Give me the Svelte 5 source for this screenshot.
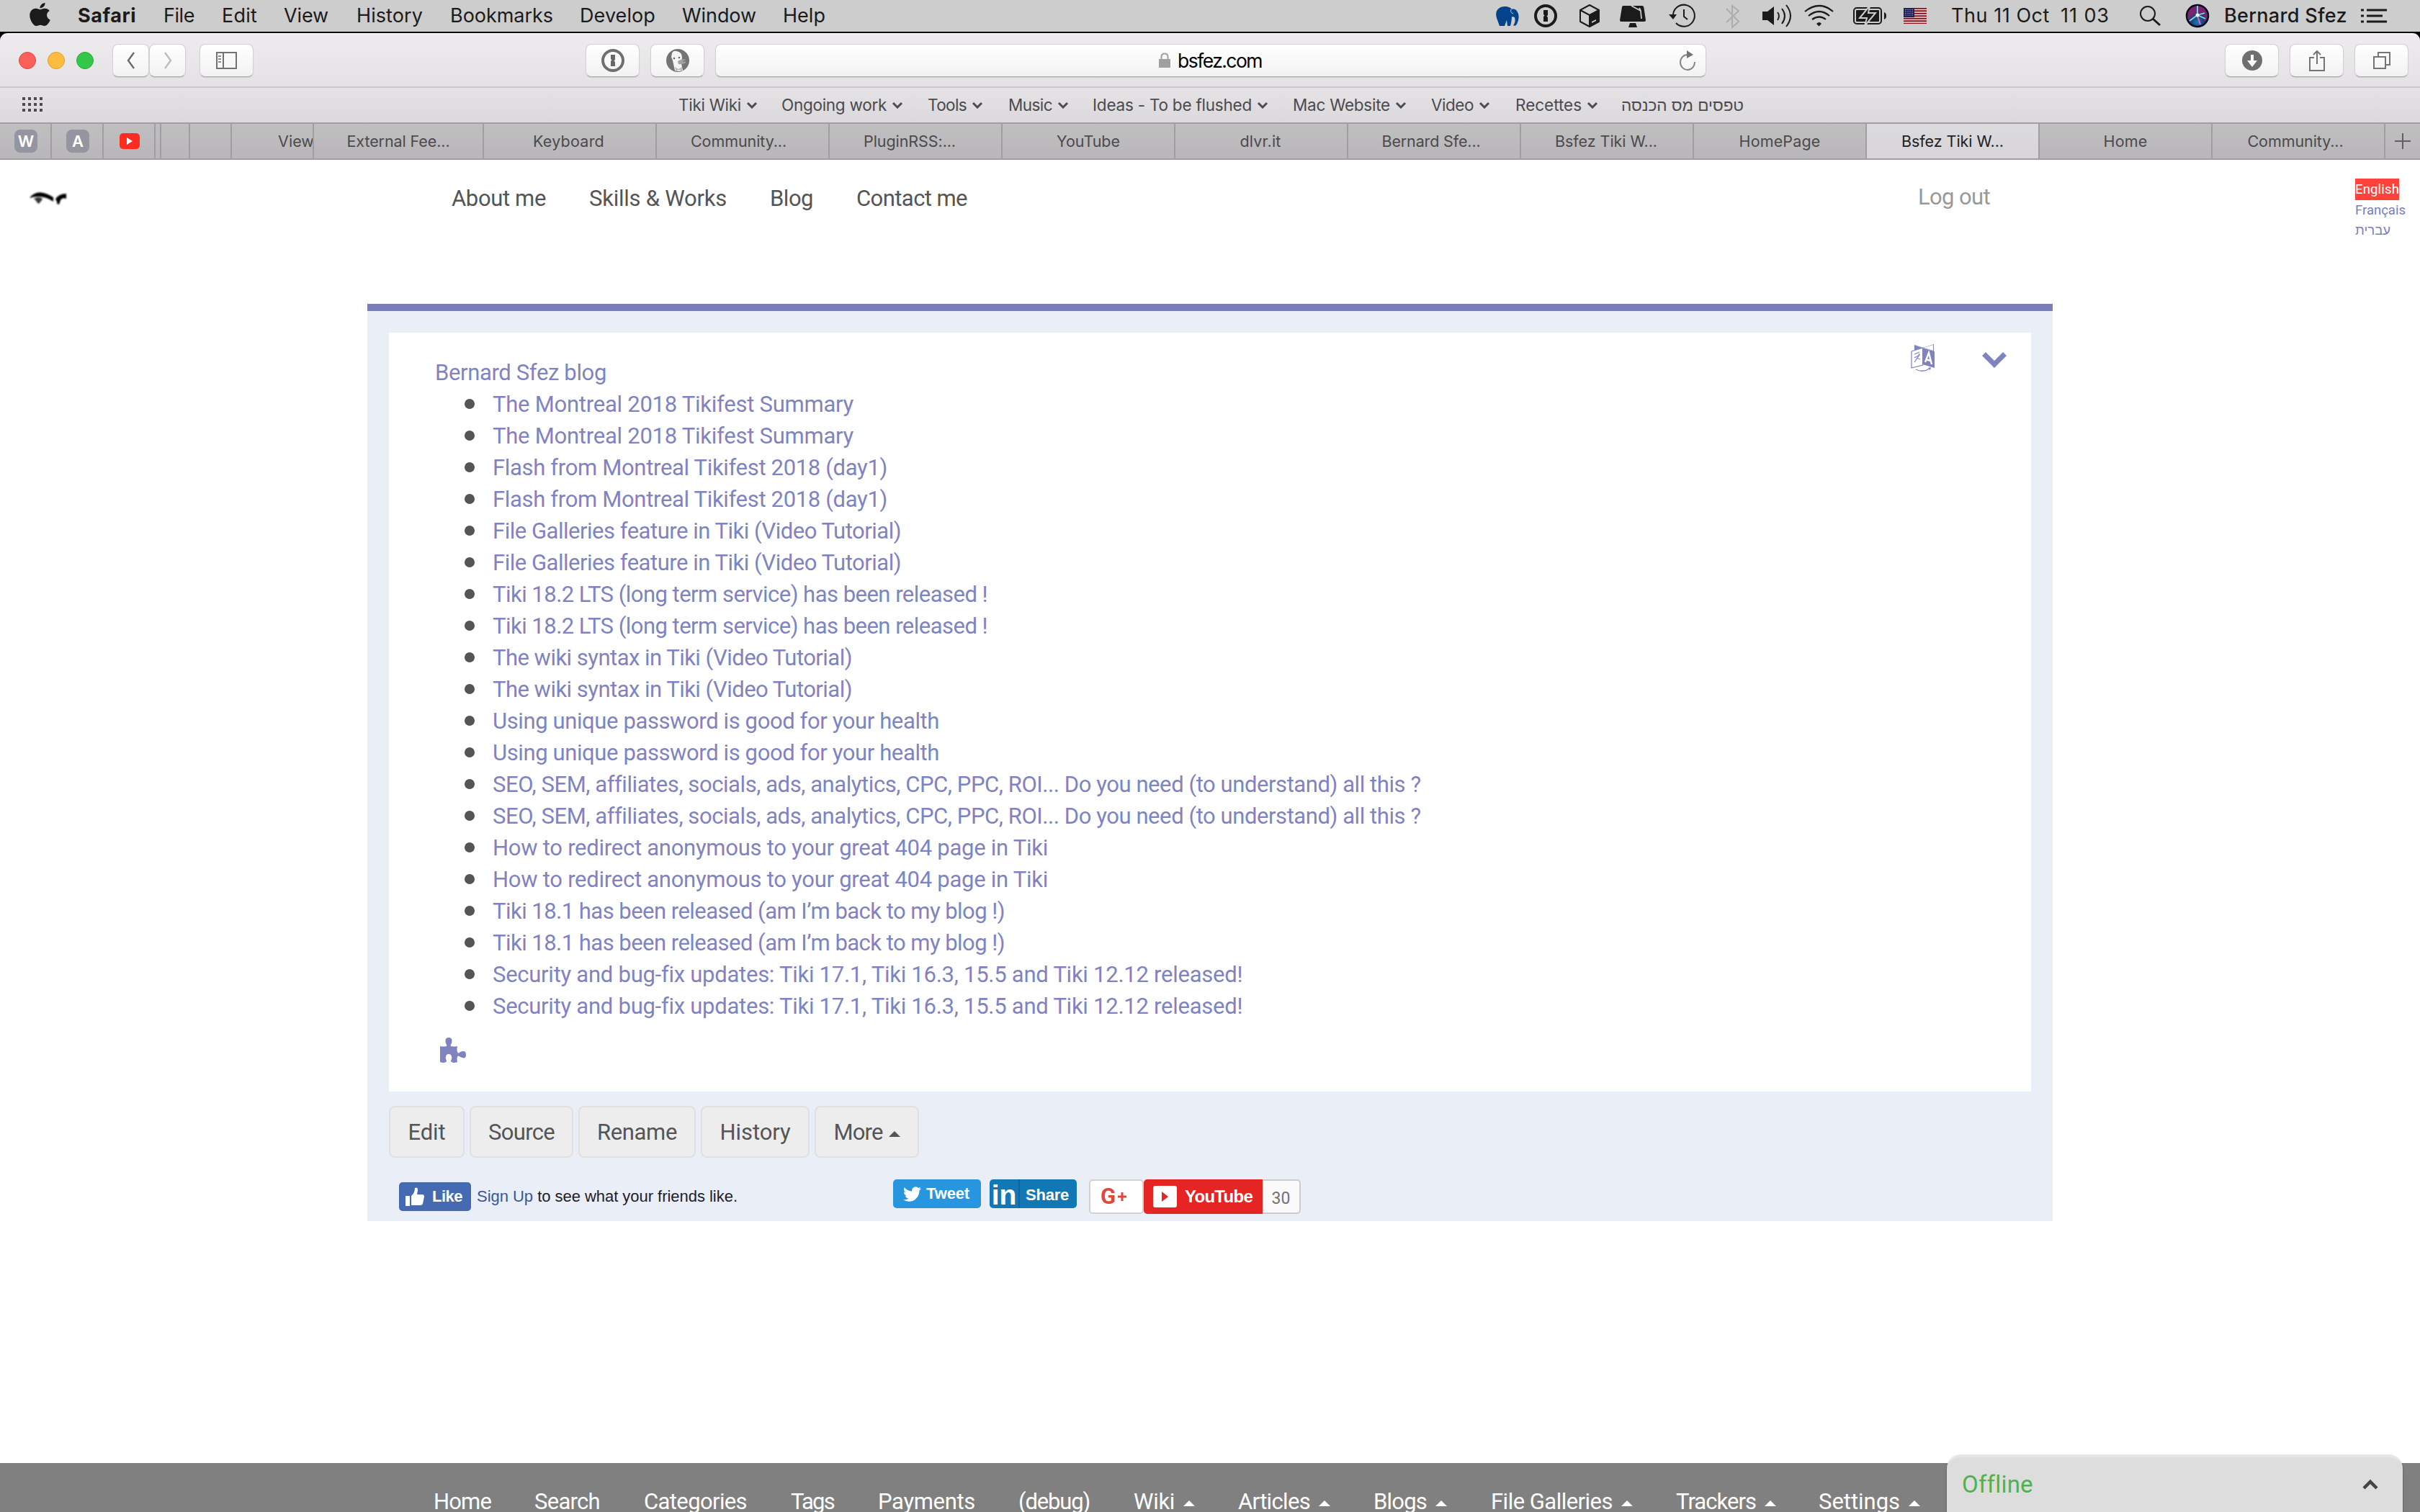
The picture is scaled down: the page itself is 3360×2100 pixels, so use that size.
<script>
  // slot: distance to the start of the next item, width: drawn text width
  const menus = [
    { label: 'File', slot: 81, width: 43 },
    { label: 'Edit', slot: 86, width: 49 },
    { label: 'View', slot: 101, width: 62 },
    { label: 'History', slot: 130, width: 92 },
    { label: 'Bookmarks', slot: 180, width: 143 },
    { label: 'Develop', slot: 142, width: 105 },
    { label: 'Window', slot: 140, width: 103 },
    { label: 'Help', slot: 90, width: 59 },
  ]

  const favorites = [
    { label: 'Tiki Wiki', slot: 143, width: 87 },
    { label: 'Ongoing work', slot: 203, width: 146 },
    { label: 'Tools', slot: 112, width: 54 },
    { label: 'Music', slot: 117, width: 61 },
    { label: 'Ideas - To be flushed', slot: 278, width: 221 },
    { label: 'Mac Website', slot: 192, width: 135 },
    { label: 'Video', slot: 117, width: 59 },
    { label: 'Recettes', slot: 147, width: 92 },
  ]

  // pad: room kept free at the right of the title
  const tabs = [
    { label: 'External Fee...', slot: 236, width: 143, pad: 0 },
    { label: 'Keyboard', slot: 240, width: 99, pad: 3 },
    { label: 'Community...', slot: 240, width: 133, pad: 11 },
    { label: 'PluginRSS:...', slot: 240, width: 128, pad: 16 },
    { label: 'YouTube', slot: 240, width: 88, pad: 0 },
    { label: 'dlvr.it', slot: 240, width: 57, pad: 2 },
    { label: 'Bernard Sfe...', slot: 240, width: 137, pad: 8 },
    { label: 'Bsfez Tiki W...', slot: 240, width: 142, pad: 2 },
    { label: 'HomePage', slot: 240, width: 113, pad: 0 },
    { label: 'Bsfez Tiki W...', slot: 240, width: 142, pad: 0, active: true },
    { label: 'Home', slot: 240, width: 61, pad: 0 },
    { label: 'Community...', slot: 240, width: 133, pad: 8 },
  ]

  const nav = [
    { label: 'About me', slot: 191, width: 131 },
    { label: 'Skills & Works', slot: 251, width: 191 },
    { label: 'Blog', slot: 120, width: 60 },
    { label: 'Contact me', slot: 200, width: 154 },
  ]

  const feed = [
    { label: 'The Montreal 2018 Tikifest Summary', width: 501 },
    { label: 'Flash from Montreal Tikifest 2018 (day1)', width: 548 },
    { label: 'File Galleries feature in Tiki (Video Tutorial)', width: 567 },
    { label: 'Tiki 18.2 LTS (long term service) has been released !', width: 687 },
    { label: 'The wiki syntax in Tiki (Video Tutorial)', width: 499 },
    { label: 'Using unique password is good for your health', width: 620 },
    { label: 'SEO, SEM, affiliates, socials, ads, analytics, CPC, PPC, ROI... Do you need (to understand) all this ?', width: 1286 },
    { label: 'How to redirect anonymous to your great 404 page in Tiki', width: 771 },
    { label: 'Tiki 18.1 has been released (am I’m back to my blog !)', width: 711 },
    { label: 'Security and bug-fix updates: Tiki 17.1, Tiki 16.3, 15.5 and Tiki 12.12 released!', width: 1040 },
  ]
  const posts = feed.flatMap((post) => [post, post])

  const actions = [
    { label: 'Edit', size: 105, width: 52 },
    { label: 'Source', size: 144, width: 92 },
    { label: 'Rename', size: 163, width: 111 },
    { label: 'History', size: 151, width: 98 },
    { label: 'More', size: 145, width: 68, caret: true },
  ]

  const footer = [
    { label: 'Home', slot: 140, width: 80 },
    { label: 'Search', slot: 152, width: 91 },
    { label: 'Categories', slot: 204, width: 143 },
    { label: 'Tags', slot: 121, width: 60 },
    { label: 'Payments', slot: 195, width: 135 },
    { label: '(debug)', slot: 160, width: 99 },
    { label: 'Wiki', slot: 145, width: 57, caret: true },
    { label: 'Articles', slot: 188, width: 100, caret: true },
    { label: 'Blogs', slot: 163, width: 74, caret: true },
    { label: 'File Galleries', slot: 257, width: 169, caret: true },
    { label: 'Trackers', slot: 198, width: 111, caret: true },
    { label: 'Settings', slot: 150, width: 113, caret: true },
  ]

  // spread the letters so the label takes exactly `width` pixels
  function fit(node, width) {
    const natural = node.getBoundingClientRect().width
    const count = node.textContent.length
    node.style.letterSpacing = `${(width - natural) / count}px`
  }
</script>

<div class="screen">
  <header class="menubar">
    <svg class="apple" viewBox="0 0 24 24" preserveAspectRatio="none">
      <path d="M12.152 6.896c-.948 0-2.415-1.078-3.96-1.04-2.04.027-3.91 1.183-4.961 3.014-2.117 3.675-.546 9.103 1.519 12.09 1.013 1.454 2.208 3.09 3.792 3.039 1.52-.065 2.09-.987 3.935-.987 1.831 0 2.35.987 3.96.948 1.637-.026 2.676-1.48 3.676-2.948 1.156-1.688 1.636-3.325 1.662-3.415-.039-.013-3.182-1.221-3.22-4.857-.026-3.04 2.48-4.494 2.597-4.559-1.429-2.09-3.623-2.324-4.39-2.376-2-.156-3.675 1.09-4.61 1.09zM15.53 3.83c.843-1.012 1.4-2.427 1.245-3.83-1.207.052-2.662.805-3.532 1.818-.78.896-1.454 2.338-1.273 3.714 1.338.104 2.715-.688 3.559-1.701" />
    </svg>
    <span class="slot app-name"><span class="text" use:fit={81}>Safari</span></span>
    {#each menus as menu}
      <span class="slot" style="width: {menu.slot}px"><span class="text" use:fit={menu.width}>{menu.label}</span></span>
    {/each}

    <div class="status">
      <svg width="53" height="44">
        <path fill="#04438c" d="M1 25C-2 15 4 9 12 9c5 0 8 1 10 4 2-1 5 0 6 1 5 5 4 13 2 17-1 4-4 6-6 4 3-3 3-7 2-11l-4-1c0 5-1 9-2 13h-4l-1-8-3 8H5z" />
        <path d="M21 13c-1 3 0 5 3 6" fill="none" stroke="#cdcdcd" />
      </svg>
      <svg width="62" height="44">
        <circle cx="16" cy="22" r="14" fill="none" stroke="#1b1b1b" stroke-width="4" />
        <path d="M13 14h6v7l-1.500 1.500L19 24v6h-6v-7l1.500-1.500L13 20z" />
      </svg>
      <svg width="57" height="44">
        <path d="M15 7l13 7v16l-13 7-13-7V14zM2 14l13 7 13-7M15 21v16" fill="none" stroke="#1b1b1b" stroke-width="2" stroke-linejoin="round" />
        <path d="M15 21l13-7v16l-13 7z" />
        <path d="M18 30l6-3v2l-6 3z" fill="#cdcdcd" />
      </svg>
      <svg width="68" height="44">
        <path d="M5 8h26q2 0 2.300 2L36 28q0 2-2 2H2q-2 0-2-2L3 10q0-2 2-2zM14 32h8l2 6H12z" />
        <path d="M16 8l13 7 1 11M27 11l2 4" fill="none" stroke="#cdcdcd" stroke-width="1.800" />
      </svg>
      <svg width="79" height="44">
        <path d="M6 20a15 15 0 1 1 4 12M21 13v10l5 4" fill="none" stroke="#1b1b1b" stroke-width="2" />
        <path d="M0 20h11l-5 7z" />
      </svg>
      <svg width="51" height="44">
        <path d="M1 12l17 18-9 8V8l9 7L1 31" fill="none" stroke="#adadad" stroke-width="2" />
      </svg>
      <svg width="58" height="44">
        <path d="M0 16h7l9-7v26l-9-7H0z" />
        <path d="M21 17q4 5 0 11M27 12q8 10 0 21M33 7q12 15 0 30" fill="none" stroke="#1b1b1b" stroke-width="2" />
      </svg>
      <svg width="68" height="44">
        <path d="M1 16q20-16 39 0M6 22q15-12 29 0M11 27q10-7 19 0" fill="none" stroke="#1b1b1b" stroke-width="2.200" />
        <path d="M17 33q4-4 7 0l-3.500 3.500z" />
      </svg>
      <svg width="70" height="44">
        <rect x="1" y="11" width="38" height="22" rx="4" fill="none" stroke="#1b1b1b" stroke-width="2" />
        <rect x="4" y="14" width="32" height="16" rx="1" />
        <path d="M43 17q3 1 3 5t-3 5z" />
        <path d="M23 8L9 25h10l-3 11 15-18H21z" stroke="#cdcdcd" stroke-width="2" />
      </svg>
      <svg width="66" height="44">
        <rect y="11" width="32" height="22" fill="#8b0d14" />
        <path d="M0 13.500h32M0 17h32M0 20.500h32M0 24h32M0 27.500h32M0 31h32" stroke="#e8e8e8" stroke-width="1.700" />
        <rect y="11" width="15" height="13" fill="#20205c" />
        <path d="M2 13.500h12M2 16h12M2 18.500h12M2 21h12" stroke="#b9b9d0" stroke-width="1" stroke-dasharray="1 1.500" />
      </svg>
      <span class="slot day"><span class="text" use:fit={137}>Thu 11 Oct</span></span>
      <span class="slot time"><span class="text" use:fit={68}>11 03</span></span>
      <svg width="64" height="44">
        <circle cx="12" cy="19" r="10" fill="none" stroke="#1b1b1b" stroke-width="2" />
        <path d="M19 26l10 9" stroke="#1b1b1b" stroke-width="3" />
      </svg>
      <svg width="54" height="44">
        <defs>
          <radialGradient id="siri" cx="0.5" cy="0.8">
            <stop offset="0" stop-color="#0d7fb5" />
            <stop offset="0.6" stop-color="#263a78" />
            <stop offset="1" stop-color="#7a2471" />
          </radialGradient>
        </defs>
        <circle cx="17" cy="22" r="15" fill="url(#siri)" stroke="#0a0a1c" stroke-width="2.500" />
        <path d="M17 8v14M17 21l11 5M17 21L6 29M17 21l10-3" stroke="#6fe6e6" stroke-width="1.800" />
        <path d="M17 22l4 12" stroke="#f05fb4" stroke-width="2" />
        <circle cx="17" cy="21" r="2.500" fill="#e8ffff" />
      </svg>
      <span class="slot user"><span class="text" use:fit={171}>Bernard Sfez</span></span>
      <svg width="82" height="44">
        <path d="M0 14h4M8 14h28M0 22h4M8 22h22M0 30h4M8 30h28" stroke="#1b1b1b" stroke-width="3" />
      </svg>
    </div>
  </header>

  <div class="window">
    <div class="toolbar">
      <div class="lights"><i class="close"></i><i class="minimize"></i><i class="zoom"></i></div>
      <div class="history">
        <button aria-label="Back"><svg width="14" height="26"><path d="M11 2L3 13l8 11" fill="none" stroke="#6b6b6b" stroke-width="2.400" /></svg></button>
        <button aria-label="Forward"><svg width="14" height="26"><path d="M3 2l8 11-8 11" fill="none" stroke="#bcbcbc" stroke-width="2.400" /></svg></button>
      </div>
      <button class="sidebar-button" aria-label="Sidebar">
        <svg width="31" height="26">
          <path d="M2 2h27v22H2zM11 2v22" fill="none" stroke="#737373" stroke-width="2" />
          <path d="M4 7h4M4 11h4M4 15h4" stroke="#8b8b8b" stroke-width="2" />
        </svg>
      </button>
      <div class="extensions">
        <button aria-label="1Password">
          <svg width="32" height="32">
            <circle cx="16" cy="16" r="14" fill="none" stroke="#6f6f6f" stroke-width="4" />
            <path d="M13 8h6v7l-1.500 1.500L19 18v6h-6v-7l1.500-1.500L13 14z" fill="#666" />
          </svg>
        </button>
        <button aria-label="DuckDuckGo">
          <svg width="32" height="32">
            <circle cx="16" cy="16" r="16" fill="#747474" />
            <path d="M8 6q2-4 6-3 8 1 8 9l-1 8 2 10-6 1-5-1-3-14-2-5z" fill="#f5f5f5" />
            <path d="M16 17q5-4 12-2l-6 2 6 1q-4 4-11 3z" fill="#a3a3a3" />
            <path d="M12 25l5 3 5-3v5l-5-1-4 2z" fill="#bcbcbc" />
            <circle cx="11" cy="13" r="1.300" fill="#666" />
            <circle cx="18" cy="12" r="1.300" fill="#666" />
          </svg>
        </button>
      </div>
      <div class="address">
        <svg class="lock" width="18" height="22">
          <path d="M1 9h16v12H1z" fill="#a0a0a0" />
          <path d="M4.500 10V6q0-4.500 4.500-4.500T13.500 6v4" fill="none" stroke="#a0a0a0" stroke-width="2" />
        </svg>
        <span class="text" use:fit={117}>bsfez.com</span>
        <svg class="reload" width="24" height="28">
          <path d="M12 6a10 10.500 0 1 0 10 10" fill="none" stroke="#858585" stroke-width="2" />
          <path d="M11 0l9 6-9 5z" fill="#757575" />
        </svg>
      </div>
      <div class="tools">
        <button aria-label="Downloads">
          <svg width="28" height="28">
            <circle cx="14" cy="14" r="14" fill="#6f6f6f" />
            <path d="M12 6h4v8h5l-7 9-7-9h5z" fill="#fff" />
          </svg>
        </button>
        <button aria-label="Share">
          <svg width="24" height="32">
            <path d="M8 12H2v18h20V12h-6M12 21V3M7 8l5-5 5 5" fill="none" stroke="#757575" stroke-width="2" />
          </svg>
        </button>
        <button aria-label="Tabs">
          <svg width="26" height="26">
            <path d="M2 8h16v16H2zM8 8V2h16v17h-6" fill="none" stroke="#757575" stroke-width="2" />
          </svg>
        </button>
      </div>
    </div>

    <div class="favorites">
      <svg class="grid" width="28" height="22">
        <path d="M0 2h28M0 10h28M0 18h28" stroke="#4c4b4d" stroke-width="4" stroke-dasharray="4 4" />
      </svg>
      {#each favorites as item}
        <span class="slot" style="width: {item.slot}px">
          <span class="text" use:fit={item.width}>{item.label}</span>
          <svg class="chevron" width="16" height="10"><path d="M2 2l6 6 6-6" fill="none" stroke="#4c4b4d" stroke-width="3" /></svg>
        </span>
      {/each}
      <span class="text" dir="rtl" use:fit={170}>טפסים מס הכנסה</span>
    </div>

    <div class="tabs">
      <div class="pin"><b>W</b></div>
      <div class="pin"><b>A</b></div>
      <div class="pin">
        <svg width="28" height="22"><rect width="28" height="22" rx="5" fill="#ff2b20" /><path d="M10 6l8 5-8 5z" fill="#fff" /></svg>
      </div>
      <div class="sliver first"></div>
      <div class="sliver second"></div>
      <div class="sliver third"></div>
      <div class="tab clipped"><span class="text" use:fit={50}>View</span></div>
      {#each tabs as tab}
        <div class="tab" class:active={tab.active} style="width: {tab.slot}px; padding-right: {tab.pad}px">
          <span class="text" use:fit={tab.width}>{tab.label}</span>
        </div>
      {/each}
      <div class="new-tab">
        <svg width="24" height="24"><path d="M12 1v22M1 12h22" stroke="#5f5e60" stroke-width="2" /></svg>
      </div>
    </div>
  </div>

  <div class="site-head">
    <svg class="logo" width="54" height="24">
      <path d="M0 10Q11-5 33 9v6Q18 4 0 10z" />
      <path d="M6 11q7-4 12 0-1 3-3 4-1 4-4 2-1-3-5-6z" fill="#333" />
      <path d="M36 12q4-8 15-8v7q-6-2-8 2l-2 6-3-1q1-3-2-6z" />
    </svg>
    <nav>
      {#each nav as item}
        <span class="slot" style="width: {item.slot}px"><span class="text" use:fit={item.width}>{item.label}</span></span>
      {/each}
    </nav>
    <span class="logout"><span class="text" use:fit={100}>Log out</span></span>
    <div class="languages">
      <span class="current"><span class="text" use:fit={61}>English</span></span>
      <span><span class="text" use:fit={70}>Français</span></span>
      <span><span class="text" dir="rtl" use:fit={49}>עברית</span></span>
    </div>
  </div>

  <main>
    <article>
      <div class="article-tools">
        <svg width="34" height="40">
          <path d="M5 2l12 4-12 4zM17 6l15-5v10" fill="#7f83c0" />
          <path d="M18 6l13-4v8z" fill="#fff" />
          <path d="M1 11l16-5v24L1 34z" fill="#fff" stroke="#7f83c0" stroke-width="1.200" />
          <path d="M16 6l17 5v23l-17-5z" fill="#7f83c0" />
          <path d="M5 15l7-3M5 20l7-4-1-2M12 16l-7 10M8 20l5 2" fill="none" stroke="#7f83c0" stroke-width="1.300" />
          <path d="M20 26l5-13 4 16M21 22l6 2" fill="none" stroke="#fff" stroke-width="2.400" />
          <path d="M7 36q10 5 19-1" fill="none" stroke="#7f83c0" stroke-width="1.300" />
          <path d="M24 34l4-1-1 4z" fill="#7f83c0" />
        </svg>
        <svg class="expand" width="34" height="22">
          <path d="M0 5l5-5 12 12L29 0l5 5-17 17z" fill="#7f83c0" />
        </svg>
      </div>
      <div class="feed-title"><span class="text" use:fit={238}>Bernard Sfez blog</span></div>
      <ul>
        {#each posts as post}
          <li><span class="text" use:fit={post.width}>{post.label}</span></li>
        {/each}
      </ul>
      <svg class="puzzle" width="36" height="35">
        <path fill="#7f83c0" d="M0 12q5 1 9 0 1-1-1-4-2-8 4-8t4 8q-2 3-1 4 4 1 9 0-1 5 0 8 1 3 4 0 8-3 8 4t-8 3q-3-3-4 0-1 3 0 7-5 2-8 0-2-1 0-4 1-7-4-7t-4 7q2 3 0 4-3 2-8 0z" />
      </svg>
    </article>

    <div class="actions">
      {#each actions as action}
        <button style="width: {action.size}px">
          <span class="text" use:fit={action.width}>{action.label}</span>
          {#if action.caret}<i class="caret"></i>{/if}
        </button>
      {/each}
    </div>

    <div class="social">
      <div class="like">
        <svg width="26" height="26">
          <path fill="#fff" d="M0 12h6v14H0zM8 12q5-4 5-11 4-2 4 3l-1 6h7q3 0 3 3l-2 10q-1 2-3 2H8z" />
        </svg>
        <span class="text" use:fit={42}>Like</span>
      </div>
      <p><span class="text" use:fit={362}><em>Sign Up</em> to see what your friends like.</span></p>
      <div class="tweet">
        <svg width="25" height="25" viewBox="0 0 24 24">
          <path fill="#fff" d="M23.953 4.57a10 10 0 01-2.825.775 4.958 4.958 0 002.163-2.723c-.951.555-2.005.959-3.127 1.184a4.920 4.920 0 00-8.384 4.482C7.690 8.095 4.067 6.130 1.640 3.162a4.822 4.822 0 00-.666 2.475c0 1.710.87 3.213 2.188 4.096a4.904 4.904 0 01-2.228-.616v.06a4.923 4.923 0 003.946 4.827 4.996 4.996 0 01-2.212.085 4.936 4.936 0 004.604 3.417 9.867 9.867 0 01-6.102 2.105c-.39 0-.779-.023-1.170-.067a13.995 13.995 0 007.557 2.209c9.053 0 13.998-7.496 13.998-13.985 0-.21 0-.42-.015-.63A9.935 9.935 0 0024 4.590z" />
        </svg>
        <span class="text" use:fit={60}>Tweet</span>
      </div>
      <div class="linkedin"><b>in</b><span class="text" use:fit={60}>Share</span></div>
      <div class="gplus"><b>G</b><svg width="12" height="14"><path d="M6 1v12M0 7h12" stroke="#dc4a3f" stroke-width="3" /></svg></div>
      <div class="youtube">
        <svg width="33" height="30"><rect width="33" height="30" rx="3" fill="#fff" /><path d="M12 8l9 7-9 7z" fill="#e42523" /></svg>
        <span class="text" use:fit={94}>YouTube</span>
      </div>
      <div class="count">30</div>
    </div>
  </main>

  <footer>
    {#each footer as item}
      <span class="slot" style="width: {item.slot}px">
        <span class="text" use:fit={item.width}>{item.label}</span>
        {#if item.caret}<i class="caret"></i>{/if}
      </span>
    {/each}
  </footer>

  <aside class="chat">
    <span class="text" use:fit={96}>Offline</span>
    <svg width="24" height="16"><path d="M3 13l9-9 9 9" fill="none" stroke="#444" stroke-width="4.500" /></svg>
  </aside>
</div>

<style>
  :global(body) {
    background: #fff;
  }

  .screen {
    position: relative;
    display: flex;
    flex-direction: column;
    width: 3360px;
    height: 2100px;
    overflow: hidden;
    background: #fff;
    font-family: Roboto, 'Liberation Sans', sans-serif;
    font-size: 31px;
    color: #555;
  }

  svg {
    display: block;
    flex: none;
  }

  .text {
    display: inline-block;
    white-space: pre;
  }

  .slot {
    display: flex;
    flex: none;
    align-items: center;
  }

  button {
    display: flex;
    align-items: center;
    justify-content: center;
    box-sizing: border-box;
    padding: 0;
    border: 0;
    font: inherit;
    color: inherit;
  }

  .menubar {
    display: flex;
    align-items: center;
    height: 44px;
    background: #cdcdcd;
    font: 27px/44px Inter, sans-serif;
    color: #1b1b1b;
  }

  .menubar svg {
    fill: #1b1b1b;
  }

  .apple {
    width: 35px;
    height: 32px;
    margin: 0 31px 4px 38px;
  }

  .app-name {
    width: 119px;
    margin-left: 4px;
    font-weight: 700;
  }

  .status {
    display: flex;
    margin-left: auto;
  }

  .day {
    width: 152px;
  }

  .time {
    width: 109px;
  }

  .user {
    width: 190px;
    font-weight: 500;
  }

  .window {
    flex: none;
    padding-top: 2px;
    background: #000;
    font: 22.5px/46px Inter, 'Liberation Sans', sans-serif;
    color: #4b4a4c;
  }

  .toolbar {
    display: flex;
    align-items: center;
    box-sizing: border-box;
    height: 76px;
    border-top: 2px solid #f6f5f6;
    border-bottom: 2px solid #cbc9cc;
    border-radius: 10px 10px 0 0;
    background: linear-gradient(#edebee, #e4e2e5);
  }

  .toolbar button,
  .address {
    height: 46px;
    border: 1px solid #d2d0d3;
    border-bottom: 1px solid #a9a8aa;
    border-radius: 8px;
    background: linear-gradient(#fff, #f2f2f2);
    box-shadow: 0 1px 1px rgba(0, 0, 0, 0.12);
  }

  .lights {
    display: flex;
    gap: 16px;
    margin-left: 26px;
  }

  .lights i {
    box-sizing: border-box;
    width: 24px;
    height: 24px;
    border-radius: 50%;
  }

  .close {
    border: 1px solid #e2463f;
    background: #fc605c;
  }

  .minimize {
    border: 1px solid #dfa023;
    background: #fdbc40;
  }

  .zoom {
    border: 1px solid #27aa35;
    background: #34c84a;
  }

  .history {
    display: flex;
    margin-left: 26px;
  }

  .history button {
    width: 51px;
  }

  .sidebar-button {
    width: 75px;
    margin-left: 19px;
  }

  .extensions {
    display: flex;
    gap: 15px;
    margin-left: 461px;
  }

  .extensions button {
    width: 75px;
  }

  .address {
    display: flex;
    align-items: center;
    box-sizing: border-box;
    width: 1376px;
    margin-left: 15px;
    padding: 0 13px 0 614px;
    font-size: 26.5px;
    color: #000;
  }

  .lock {
    margin-right: 9px;
  }

  .reload {
    margin-left: auto;
  }

  .tools {
    display: flex;
    gap: 15px;
    margin: 0 16px 0 auto;
  }

  .tools button {
    width: 75px;
  }

  .favorites {
    display: flex;
    align-items: center;
    height: 48px;
    background: linear-gradient(#e4e2e5, #dbd9dc);
  }

  .grid {
    margin: 0 883px 0 31px;
  }

  .chevron {
    margin-left: 7px;
  }

  .tabs {
    display: flex;
    box-sizing: border-box;
    height: 52px;
    border-top: 2px solid #a09ea1;
    border-bottom: 2px solid #a09ea1;
    background: linear-gradient(#c0bfc0, #b8b6b9);
    font-size: 21.5px;
  }

  .tabs > div {
    display: flex;
    flex: none;
    align-items: center;
    justify-content: center;
    box-sizing: border-box;
    border-right: 2px solid #a09ea1;
  }

  .tabs > .pin {
    width: 72px;
    padding-left: 2px;
  }

  .pin b {
    width: 32px;
    height: 32px;
    border-radius: 8px;
    background: #9495a0;
    font-size: 22px;
    font-weight: 600;
    line-height: 33px;
    text-align: center;
    color: #fff;
  }

  .sliver.first {
    width: 8px;
  }

  .sliver.second {
    width: 40px;
  }

  .sliver.third {
    width: 58px;
  }

  .tabs > .clipped {
    width: 114px;
    padding-left: 64px;
    justify-content: flex-start;
    overflow: hidden;
  }

  .tabs > .active {
    background: linear-gradient(#dcdbdd, #d6d4d7);
    color: #222;
  }

  .tabs > .new-tab {
    width: 48px;
    border: 0;
  }

  .site-head {
    display: flex;
    align-items: flex-start;
    flex: none;
    height: 200px;
  }

  .logo {
    margin: 43px 0 0 41px;
    filter: blur(0.8px);
  }

  nav {
    display: flex;
    width: 2036px;
    margin: 32px 0 0 532px;
    line-height: 44px;
  }

  .logout {
    margin-top: 30px;
    line-height: 44px;
    color: #999;
  }

  .languages {
    display: flex;
    flex-direction: column;
    align-items: flex-start;
    margin: 26px 0 0 507px;
    font-size: 18.5px;
    line-height: 28px;
    color: #797ebb;
  }

  .languages .current {
    height: 30px;
    line-height: 30px;
    background: #ff423c;
    color: #fff;
  }

  main {
    flex: none;
    box-sizing: border-box;
    width: 2340px;
    height: 1274px;
    margin-left: 510px;
    padding: 30px 30px 0;
    border-top: 10px solid #797ebb;
    background: #eaeef6;
  }

  article {
    position: relative;
    box-sizing: border-box;
    height: 1054px;
    padding: 34px 64px;
    background: #fff;
    line-height: 44px;
    color: #7f83c2;
  }

  .article-tools {
    position: absolute;
    top: 15px;
    right: 34px;
    display: flex;
    gap: 65px;
  }

  .expand {
    margin-top: 12px;
  }

  ul {
    margin: 0;
    padding: 0 0 0 80px;
    list-style: none;
  }

  li {
    display: flex;
    align-items: center;
    height: 44px;
  }

  li::before {
    content: '';
    width: 14px;
    height: 14px;
    margin: 0 25px 3px -39px;
    border-radius: 50%;
    background: #555;
  }

  .puzzle {
    margin: 21px 0 0 7px;
  }

  .actions {
    display: flex;
    gap: 7px;
    margin-top: 20px;
  }

  .actions button {
    height: 72px;
    border: 2px solid #e0e0e0;
    border-radius: 8px;
    background: #ededed;
  }

  .caret {
    border: solid transparent;
    border-width: 0 8px 8px;
    border-bottom-color: currentColor;
    margin: 5px 0 0 8px;
  }

  .social {
    display: flex;
    align-items: flex-start;
    margin-top: 30px;
    font: 22px/24px 'Liberation Sans', Arial, sans-serif;
  }

  .social > div {
    display: flex;
    align-items: center;
    box-sizing: border-box;
    height: 40px;
    border-radius: 5px;
    font-weight: 700;
    color: #fff;
  }

  .social > .like {
    width: 100px;
    margin: 4px 0 0 14px;
    padding-left: 9px;
    gap: 11px;
    background: #466ab2;
  }

  .social p {
    width: 578px;
    margin: 12px 0 0 8px;
    color: #1d2129;
  }

  .social em {
    font-style: normal;
    color: #385898;
  }

  .social > .tweet {
    width: 122px;
    padding-left: 14px;
    gap: 7px;
    background: #2896df;
  }

  .social > .linkedin {
    width: 121px;
    margin-left: 12px;
    background: #1278b5;
  }

  .linkedin b {
    box-sizing: border-box;
    width: 42px;
    height: 40px;
    margin-right: 8px;
    border-right: 2px solid #0d6699;
    font-size: 39px;
    line-height: 43px;
    text-align: center;
  }

  .linkedin .text {
    margin-top: 3px;
  }

  .social > .gplus {
    width: 76px;
    height: 48px;
    margin-left: 17px;
    padding-left: 14px;
    gap: 3px;
    border: 2px solid #d2d2d2;
    background: #fff;
    color: #dc4a3f;
  }

  .gplus b {
    font: 700 31px/44px Roboto, sans-serif;
  }

  .social > .youtube {
    width: 165px;
    height: 48px;
    padding-left: 13px;
    gap: 11px;
    border-radius: 5px 0 0 5px;
    background: #e42523;
    font-size: 24px;
  }

  .social > .count {
    width: 53px;
    height: 48px;
    padding-top: 6px;
    justify-content: center;
    border: 2px solid #ccc;
    border-left: 0;
    border-radius: 0 5px 5px 0;
    background: #fafafa;
    font: 23px/30px Roboto, sans-serif;
    color: #737373;
  }

  footer {
    display: flex;
    align-items: flex-end;
    box-sizing: border-box;
    height: 68px;
    margin-top: auto;
    padding-left: 602px;
    background: #808080;
    color: #fff;
  }

  footer .slot {
    height: 29px;
    line-height: 44px;
  }

  footer .caret {
    margin-left: 12px;
  }

  .chat {
    position: absolute;
    right: 24px;
    bottom: 0;
    display: flex;
    align-items: center;
    justify-content: space-between;
    box-sizing: border-box;
    width: 633px;
    height: 80px;
    padding: 0 33px 0 21px;
    border-top: 4px solid #e6e6e6;
    border-radius: 20px 20px 0 0;
    background: #ddd;
    box-shadow: 0 2px 3px rgba(0, 0, 0, 0.4);
    font: 400 33px/76px Roboto, sans-serif;
    color: #4db350;
  }
</style>
